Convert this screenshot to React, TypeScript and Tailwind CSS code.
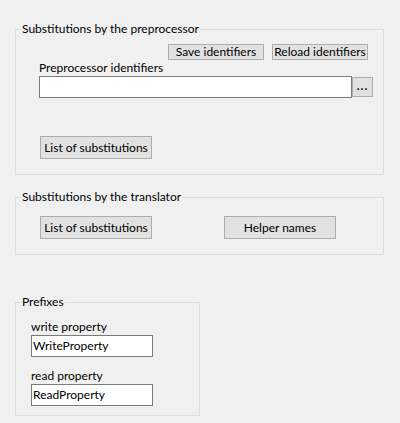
export default function App() {
  const font = { fontFamily: 'Lato, "Noto Sans", sans-serif' };
  const btn =
    "flex items-center justify-center whitespace-nowrap border border-[#adadad] bg-[#e1e1e1] text-black leading-none";
  const legend = "ml-[5px] px-[1px] leading-[14px] whitespace-nowrap";

  return (
    <div
      className="w-[400px] h-[423px] bg-[#f0f0f0] text-[12px] text-black pt-[22px]"
      style={font}
    >
      <fieldset className="ml-[15px] w-[369px] border border-[#dcdcdc] p-0 pb-[15px]">
        <legend className={legend}>Substitutions by the preprocessor</legend>
        <div className="flex justify-end gap-[8px] mt-[8px] pr-[15px]">
          <button className={`${btn} w-[96px] h-[16px]`}>Save identifiers</button>
          <button className={`${btn} w-[96px] h-[16px]`}>Reload identifiers</button>
        </div>
        <div className="ml-[23px] leading-[14px] mt-[1px]">Preprocessor identifiers</div>
        <div className="flex ml-[23px] mt-[1px]">
          <div className="w-[313px] h-[22px] border border-[#7a7a7a] bg-white" />
          <button className={`${btn} w-[21px] h-[20px] mt-[1px] font-bold tracking-[1px] pb-[2px]`}>...</button>
        </div>
        <button className={`${btn} ml-[24px] mt-[38px] w-[112px] h-[23px]`}>
          List of substitutions
        </button>
      </fieldset>

      <fieldset className="ml-[15px] mt-[15px] w-[369px] border border-[#dcdcdc] p-0 pb-[15px]">
        <legend className={legend}>Substitutions by the translator</legend>
        <div className="flex mt-[12px] ml-[24px] gap-[72px]">
          <button className={`${btn} w-[112px] h-[23px]`}>List of substitutions</button>
          <button className={`${btn} w-[112px] h-[23px]`}>Helper names</button>
        </div>
      </fieldset>

      <fieldset className="ml-[15px] mt-[40px] w-[185px] border border-[#dcdcdc] p-0 pb-[9px]">
        <legend className={legend}>Prefixes</legend>
        <div className="ml-[15px] mt-[11px] leading-[14px]">write property</div>
        <div className="ml-[15px] mt-[1px] w-[122px] h-[22px] border border-[#7a7a7a] bg-white px-[1px] flex items-center">
          WriteProperty
        </div>
        <div className="ml-[15px] mt-[12px] leading-[14px]">read property</div>
        <div className="ml-[15px] mt-[1px] w-[122px] h-[22px] border border-[#7a7a7a] bg-white px-[1px] flex items-center">
          ReadProperty
        </div>
      </fieldset>
    </div>
  );
}
